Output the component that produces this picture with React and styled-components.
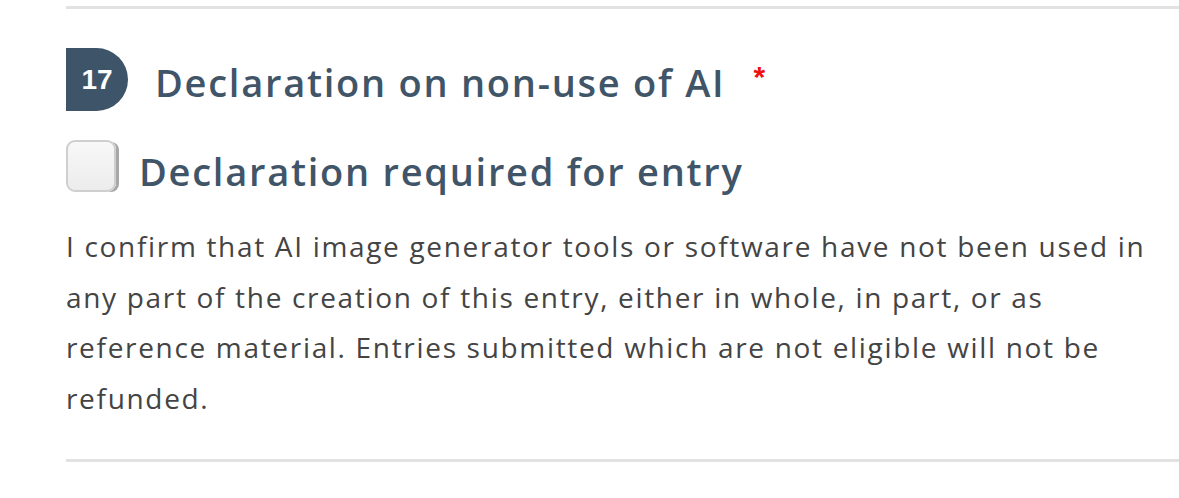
import styled, { createGlobalStyle } from "styled-components";

const GlobalStyle = createGlobalStyle`
  html, body {
    margin: 0;
    padding: 0;
    background: #ffffff;
  }
  body {
    font-family: "Open Sans", "Liberation Sans", sans-serif;
  }
`;

const Page = styled.div`
  width: 1179px;
  height: 498px;
  overflow: hidden;
  padding: 6px 0 0 66px;
  box-sizing: border-box;
`;

const Rule = styled.hr`
  margin: 0;
  border: 0;
  height: 3px;
  background: #e2e2e2;
  margin-top: ${(p) => p.$top || 0}px;
`;

const Question = styled.section`
  display: flex;
  flex-direction: column;
`;

const TitleRow = styled.div`
  display: flex;
  align-items: center;
  gap: 27px;
  margin-top: 39px;
`;

const Badge = styled.div`
  width: 62px;
  height: 63px;
  background: #3e5469;
  color: #fff;
  border-radius: 0 32px 32px 0;
  display: flex;
  align-items: center;
  justify-content: center;
  font-family: "Liberation Sans", sans-serif;
  font-weight: bold;
  font-size: 28px;
  flex-shrink: 0;
`;

const Title = styled.h2`
  margin: 0;
  font-size: 38px;
  font-weight: 600;
  color: #415569;
  letter-spacing: 1.75px;
  position: relative;
  top: ${(p) => p.$shift || 0}px;
`;

const Required = styled.span`
  color: #ee1111;
  font-family: "Liberation Sans", sans-serif;
  font-weight: bold;
  font-size: 30px;
  margin-left: 28px;
  position: relative;
  top: -10px;
`;

const CheckRow = styled.label`
  display: flex;
  align-items: center;
  gap: 23px;
  margin-top: 29px;
`;

const Box = styled.span`
  width: 50px;
  height: 52px;
  border: 2px solid #cfcfcf;
  border-radius: 9px;
  background: linear-gradient(#f8f8f8, #ececec);
  box-sizing: border-box;
  box-shadow: 4px 1px 0 -1px #a8a8a8;
  flex-shrink: 0;
`;

const Body = styled.p`
  margin: 29px 0 0;
  font-size: 28px;
  line-height: 50.7px;
  letter-spacing: 1.68px;
  color: #444;
  width: 1095px;
`;

export default function App() {
  return (
    <>
      <GlobalStyle />
      <Page>
        <Rule />
        <Question>
          <TitleRow>
            <Badge>17</Badge>
            <Title $shift={2}>
              Declaration on non-use of AI
              <Required>*</Required>
            </Title>
          </TitleRow>
          <CheckRow>
            <Box />
            <Title as="span" $shift={5}>Declaration required for entry</Title>
          </CheckRow>
          <Body>
            I confirm that AI image generator tools or software have not been used in any part
            of the creation of this entry, either in whole, in part, or as reference material.
            Entries submitted which are not eligible will not be refunded.
          </Body>
        </Question>
        <Rule $top={35} />
      </Page>
    </>
  );
}
